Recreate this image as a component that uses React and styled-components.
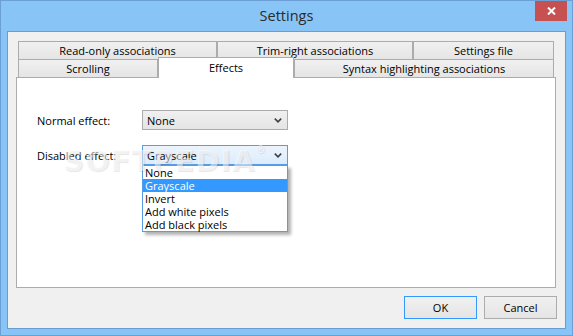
import React from "react";
import styled, { createGlobalStyle } from "styled-components";

const GlobalStyle = createGlobalStyle`
  html, body {
    margin: 0;
    padding: 0;
    background: #ffffff;
  }
  body {
    font-family: "Segoe UI", "Open Sans", "Noto Sans", sans-serif;
    font-size: 11px;
    color: #000000;
  }
`;

const topTabs = [
  { label: "Read-only associations", width: 199 },
  { label: "Trim-right associations", width: 196 },
  { label: "Settings file" },
];

const bottomTabs = [
  { label: "Scrolling", width: 140 },
  { label: "Effects", width: 136, selected: true },
  { label: "Syntax highlighting associations" },
];

const effectOptions = ["None", "Grayscale", "Invert", "Add white pixels", "Add black pixels"];

function Chevron() {
  return (
    <svg width="8" height="5" viewBox="0 0 8 5">
      <polyline points="0.8,0.6 4,3.8 7.2,0.6" fill="none" stroke="#404040" strokeWidth="1.6" />
    </svg>
  );
}

function CloseGlyph() {
  return (
    <svg width="9" height="8" viewBox="0 0 9 8">
      <path d="M1 0.5 L8 7.5 M8 0.5 L1 7.5" stroke="#ffffff" strokeWidth="2" />
    </svg>
  );
}

function ComboBox(props) {
  const { value, open, options } = props;
  return (
    <ComboWrap>
      <Combo $open={open}>
        <ComboText>{value}</ComboText>
        <Chevron />
      </Combo>
      {open && (
        <DropList>
          {options.map((opt) => (
            <DropItem key={opt} $active={opt === value}>
              {opt}
            </DropItem>
          ))}
        </DropList>
      )}
    </ComboWrap>
  );
}

export default function App() {
  return (
    <>
      <GlobalStyle />
      <Window>
        <TitleBar>
          <Title>Settings</Title>
          <CloseButton>
            <CloseGlyph />
          </CloseButton>
        </TitleBar>
        <Client>
          <TabRow>
            {topTabs.map((t) => (
              <Tab key={t.label} $width={t.width}>
                {t.label}
              </Tab>
            ))}
          </TabRow>
          <TabRow>
            {bottomTabs.map((t) => (
              <Tab key={t.label} $width={t.width} $selected={t.selected}>
                {t.label}
              </Tab>
            ))}
          </TabRow>
          <Panel>
            <FormRow>
              <FieldLabel>Normal effect:</FieldLabel>
              <ComboBox value="None" />
            </FormRow>
            <FormRow>
              <FieldLabel>Disabled effect:</FieldLabel>
              <ComboBox value="Grayscale" open options={effectOptions} />
            </FormRow>
            <Watermark>
              SOFTPEDIA<sup>®</sup>
            </Watermark>
          </Panel>
          <ButtonRow>
            <DialogButton $default>OK</DialogButton>
            <DialogButton>Cancel</DialogButton>
          </ButtonRow>
        </Client>
      </Window>
    </>
  );
}

const Window = styled.div`
  width: 573px;
  height: 336px;
  box-sizing: border-box;
  border: 1px solid #6c9fd6;
  background: #88c4f6;
  padding: 0 6px 6px;
  display: flex;
  flex-direction: column;
`;

const TitleBar = styled.div`
  height: 30px;
  display: grid;
  grid-template-columns: 1fr auto 1fr;
  align-items: start;
`;

const Title = styled.div`
  grid-column: 2;
  font-size: 14.5px;
  line-height: 30px;
  color: #2b2b2b;
`;

const CloseButton = styled.div`
  grid-column: 3;
  justify-self: end;
  width: 32px;
  height: 20px;
  margin-right: -1px;
  background: #c75050;
  display: flex;
  align-items: center;
  justify-content: center;
`;

const Client = styled.div`
  flex: 1;
  border: 1px solid #6a9cd2;
  background: #f0f0f0;
  padding: 9px 9px 9px 8px;
  display: flex;
  flex-direction: column;
`;

const TabRow = styled.div`
  height: 18px;
  margin: 0 2px;
  display: flex;
  align-items: flex-start;
`;

const Tab = styled.div`
  box-sizing: border-box;
  ${(p) => (p.$width ? `width: ${p.$width}px;` : "flex: 1;")}
  height: ${(p) => (p.$selected ? "21px" : "18px")};
  margin-top: ${(p) => (p.$selected ? "-2px" : "0")};
  border: 1px solid #acacac;
  border-bottom: 0;
  background: ${(p) => (p.$selected ? "#ffffff" : "linear-gradient(#f0f0f0, #e5e5e5)")};
  position: ${(p) => (p.$selected ? "relative" : "static")};
  z-index: ${(p) => (p.$selected ? 1 : "auto")};
  display: flex;
  justify-content: center;
  align-items: ${(p) => (p.$selected ? "flex-start" : "center")};
  padding-top: ${(p) => (p.$selected ? "2px" : "0")};
  font-size: 11px;
  line-height: 15px;
  white-space: nowrap;
`;

const Panel = styled.div`
  position: relative;
  height: 211px;
  box-sizing: border-box;
  border: 1px solid #acacac;
  background: #ffffff;
  padding: 32px 0 0 20px;
  display: flex;
  flex-direction: column;
  gap: 15px;
`;

const FormRow = styled.div`
  display: flex;
  align-items: center;
  height: 20px;
`;

const FieldLabel = styled.div`
  width: 105px;
  font-size: 11px;
`;

const ComboWrap = styled.div`
  position: relative;
  width: 146px;
`;

const Combo = styled.div`
  box-sizing: border-box;
  height: 20px;
  border: 1px solid ${(p) => (p.$open ? "#569de5" : "#acacac")};
  background: ${(p) =>
    p.$open ? "linear-gradient(#ecf4fc, #dcecfc)" : "linear-gradient(#f0f0f0, #e5e5e5)"};
  display: flex;
  align-items: center;
  padding: 0 5px 0 4px;
`;

const ComboText = styled.span`
  flex: 1;
  font-size: 11px;
`;

const DropList = styled.div`
  position: absolute;
  top: 20px;
  left: 0;
  width: 146px;
  box-sizing: border-box;
  border: 1px solid #569de5;
  background: #ffffff;
  box-shadow: 3px 3px 3px rgba(0, 0, 0, 0.3);
  z-index: 2;
`;

const DropItem = styled.div`
  height: 13px;
  line-height: 13px;
  padding-left: 2px;
  font-size: 11px;
  background: ${(p) => (p.$active ? "#3399ff" : "transparent")};
  color: ${(p) => (p.$active ? "#ffffff" : "#000000")};
`;

const Watermark = styled.div`
  position: absolute;
  left: 46px;
  top: 66px;
  font-family: "DejaVu Sans", sans-serif;
  font-weight: bold;
  font-size: 29px;
  letter-spacing: 1px;
  color: rgba(255, 255, 255, 0.55);
  text-shadow: 1px 1px 1px rgba(0, 0, 0, 0.1);
  pointer-events: none;
  z-index: 3;

  sup {
    font-size: 10px;
    vertical-align: top;
  }
`;

const ButtonRow = styled.div`
  margin-top: 8px;
  margin-right: -1px;
  display: flex;
  justify-content: flex-end;
  gap: 7px;
`;

const DialogButton = styled.div`
  box-sizing: border-box;
  width: 73px;
  height: 23px;
  border: 1px solid ${(p) => (p.$default ? "#3399ff" : "#acacac")};
  background: linear-gradient(#f0f0f0, #e5e5e5);
  display: flex;
  align-items: center;
  justify-content: center;
  font-size: 11px;
`;
